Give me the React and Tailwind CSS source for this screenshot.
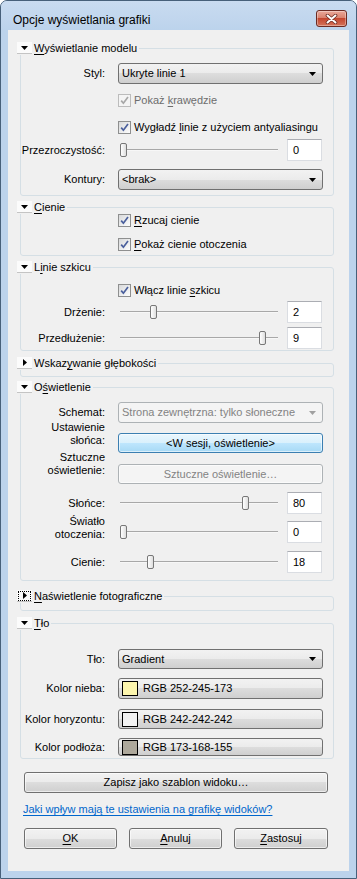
import React from "react";

const FONT = "font-['Liberation_Sans',Arial,sans-serif]";
const BTN_BG = "bg-[linear-gradient(#f2f2f2,#ebebeb_50%,#dddddd_50%,#cfcfcf)]";

const U = ({ children }) => <span className="underline underline-offset-[2px]">{children}</span>;

const Tri = ({ dir = "down", color = "#000" }) =>
  dir === "down" ? (
    <svg width="7" height="4" viewBox="0 0 7 4">
      <path d="M0 0H7L3.5 4Z" fill={color} />
    </svg>
  ) : (
    <svg width="4" height="7" viewBox="0 0 4 7">
      <path d="M0 0V7L4 3.5Z" fill={color} />
    </svg>
  );

const Group = ({ title, collapsed, focus, className = "", children }) => (
  <fieldset className={`ml-[12px] mr-[15px] min-w-0 border border-[#d5dfe5] rounded-[3px] ${className}`}>
    <legend className="-ml-[4px] pr-[2px] h-[14px] flex items-center">
      <span
        className={`w-[15px] h-[12px] flex items-center justify-center bg-[#fbfbfb] border-b border-[#c4c4c4] ${
          focus ? "outline-1 outline-dotted outline-black -outline-offset-2" : ""
        }`}
      >
        <Tri dir={collapsed ? "right" : "down"} />
      </span>
      <span className="ml-[2px] leading-[14px]">{title}</span>
    </legend>
    {children}
  </fieldset>
);

const Row = ({ label, className = "", labelClass = "", end, children }) => (
  <div className={`flex ${end ? "items-end" : "items-center"} ${className}`}>
    <div className={`w-[84px] shrink-0 text-right ${labelClass}`}>{label}</div>
    <div className="ml-[13px] self-stretch flex items-center">{children}</div>
  </div>
);

const Check = ({ checked, disabled }) => (
  <span
    className={`w-[13px] h-[13px] shrink-0 border flex items-center justify-center ${
      disabled ? "border-[#bcbcbc] bg-[#f4f4f4]" : "border-[#8e8f8f] bg-[linear-gradient(135deg,#d8d9da,#fdfdfd)]"
    }`}
  >
    {checked && (
      <svg width="9" height="9" viewBox="0 0 9 9">
        <path d="M1.2 4.6L3.4 7.2L8 1" fill="none" stroke={disabled ? "#a7a7a7" : "#4a5f9c"} strokeWidth="1.7" />
      </svg>
    )}
  </span>
);

const CheckRow = ({ className = "", checked, disabled, children }) => (
  <div className={`flex items-center h-[13px] ${className}`}>
    <div className="w-[97px] shrink-0" />
    <Check checked={checked} disabled={disabled} />
    <span className={`ml-[3px] ${disabled ? "text-[#6d6d6d]" : ""}`}>{children}</span>
  </div>
);

const Combo = ({ text, disabled, h = "h-[21px]" }) => (
  <div
    className={`w-[205px] ${h} rounded-[3px] border flex items-center pl-[3px] pr-[6px] ${
      disabled ? "border-[#adb2b5] bg-[#f4f4f4] text-[#838383]" : `border-[#707070] ${BTN_BG}`
    }`}
  >
    <span className="flex-1 truncate">{text}</span>
    <Tri color={disabled ? "#a0a0a0" : "#000"} />
  </div>
);

const Slider = ({ v }) => (
  <div className="relative w-[161px] h-[16px]">
    <div className="absolute left-[2px] right-[1px] top-[7px] h-[2px] border-t border-[#a8a8a8] bg-[#f7f7f7]" />
    <div
      className="absolute top-[1px] w-[7px] h-[14px] rounded-[2px] border border-[#777] bg-[linear-gradient(to_right,#ffffff,#dedede)]"
      style={{ left: 2 + Math.round(v * 151) }}
    />
  </div>
);

const TextBox = ({ value }) => (
  <div className="ml-[8px] w-[35px] h-[22px] bg-white border border-[#dadde2] border-t-[#abadb3] pl-[5px] flex items-center">
    {value}
  </div>
);

const Btn = ({ children, className = "", variant = "normal" }) => {
  const v = {
    normal: `border-[#707070] ${BTN_BG}`,
    blue: "border-[#3c7fb1] bg-[linear-gradient(#eaf6fd,#d9f0fc_50%,#bee6fd_50%,#a7d9f5)]",
    disabled: "border-[#adb2b5] bg-[#f4f4f4] text-[#838383]",
  }[variant];
  return (
    <div className={`rounded-[3px] border flex items-center justify-center shadow-[inset_0_0_0_1px_rgba(255,255,255,0.6)] ${v} ${className}`}>
      {children}
    </div>
  );
};

const Swatch = ({ color, text }) => (
  <div className={`w-[205px] h-full rounded-[3px] border border-[#707070] ${BTN_BG} flex items-center pl-[3px]`}>
    <span className={`w-[16px] h-[15px] border border-black ${color}`} />
    <span className="ml-[5px]">{text}</span>
  </div>
);

const Close = () => (
  <div className="w-[31px] h-[17px] rounded-[3px] border border-[#6b2a22] bg-[linear-gradient(#eaa89a,#d9826f_45%,#c4462f_50%,#d4735a)] flex items-center justify-center shadow-[inset_0_0_0_1px_rgba(255,255,255,0.35)]">
    <svg width="13" height="10" viewBox="0 0 13 10">
      <path d="M2.5 1.5L10.5 8.5M10.5 1.5L2.5 8.5" stroke="#6b2a22" strokeWidth="3.6" strokeLinecap="round" />
      <path d="M2.5 1.5L10.5 8.5M10.5 1.5L2.5 8.5" stroke="#ffffff" strokeWidth="2" strokeLinecap="round" />
    </svg>
  </div>
);

export default function App() {
  return (
    <div className={`w-[357px] h-[879px] ${FONT} text-[11px] leading-[13px] text-black`}>
      <div className="h-full flex flex-col border border-[#47607a] rounded-t-[7px] bg-[#bcd3ec]">
        <div className="h-[29px] shrink-0 flex items-start pl-[12px] pr-[9px] pt-[9px] rounded-t-[6px] bg-[linear-gradient(#c9dbf0,#bcd3ec)]">
          <div className="flex-1 text-[12px] leading-[15px] mt-[3px]">Opcje wyświetlania grafiki</div>
          <Close />
        </div>

        <div className="flex-1 mx-[7px] mb-[7px] bg-[#f0f0f0] flex flex-col">
          <Group title={<><U>W</U>yświetlanie modelu</>} className="mt-[11px] pb-[5px]">
            <Row label="Styl:" className="mt-[8px] h-[21px]">
              <Combo text="Ukryte linie 1" />
            </Row>
            <CheckRow className="mt-[10px]" checked disabled>
              Pokaż <U>k</U>rawędzie
            </CheckRow>
            <CheckRow className="mt-[14px]" checked>
              Wygładź <U>l</U>inie z użyciem antyaliasingu
            </CheckRow>
            <Row label="Przezroczystość:" className="mt-[5px] h-[22px]">
              <Slider v={0} />
              <TextBox value="0" />
            </Row>
            <Row label="Kontury:" className="mt-[8px] h-[21px]">
              <Combo text={"<brak>"} />
            </Row>
          </Group>

          <Group title={<><U>C</U>ienie</>} className="mt-[4px] pb-[4px]">
            <CheckRow checked>
              <U>R</U>zucaj cienie
            </CheckRow>
            <CheckRow className="mt-[11px]" checked>
              <U>P</U>okaż cienie otoczenia
            </CheckRow>
          </Group>

          <Group title={<>L<U>i</U>nie szkicu</>} className="mt-[4px] pb-[1px]">
            <CheckRow className="mt-[10px]" checked>
              Włącz linie <U>s</U>zkicu
            </CheckRow>
            <Row label="Drżenie:" className="mt-[4px] h-[22px]">
              <Slider v={0.2} />
              <TextBox value="2" />
            </Row>
            <Row label="Przedłużenie:" className="mt-[4px] h-[22px]">
              <Slider v={0.92} />
              <TextBox value="9" />
            </Row>
          </Group>

          <Group title={<>Wskaz<U>y</U>wanie głębokości</>} collapsed className="mt-[5px] pb-[6px]" />

          <Group title={<>O<U>ś</U>wietlenie</>} className="mt-[3px] pb-[7px]">
            <Row label="Schemat:" className="mt-[8px] h-[21px]">
              <Combo text="Strona zewnętrzna: tylko słoneczne" disabled />
            </Row>
            <Row
              label={<>Ustawienie<br />słońca:</>}
              end
              labelClass="pb-[6px]"
              className="mt-[10px] h-[20px]"
            >
              <Btn variant="blue" className="w-[205px] h-[20px]">
                {"<W sesji, oświetlenie>"}
              </Btn>
            </Row>
            <Row
              label={<>Sztuczne<br />oświetlenie:</>}
              end
              labelClass="pb-[7px]"
              className="mt-[11px] h-[20px]"
            >
              <Btn variant="disabled" className="w-[205px] h-[20px]">
                Sztuczne oświetlenie…
              </Btn>
            </Row>
            <Row label="Słońce:" className="mt-[8px] h-[22px]">
              <Slider v={0.81} />
              <TextBox value="80" />
            </Row>
            <Row
              label={<>Światło<br />otoczenia:</>}
              end
              labelClass="pb-[2px]"
              className="mt-[7px] h-[22px]"
            >
              <Slider v={0} />
              <TextBox value="0" />
            </Row>
            <Row label="Cienie:" className="mt-[8px] h-[22px]">
              <Slider v={0.18} />
              <TextBox value="18" />
            </Row>
          </Group>

          <Group title={<><U>N</U>aświetlenie fotograficzne</>} collapsed focus className="mt-[8px] pb-[7px]" />

          <Group title={<><U>T</U>ło</>} className="mt-[5px] pb-[2px]">
            <Row label="Tło:" className="mt-[19px] h-[20px]">
              <Combo text="Gradient" h="h-[20px]" />
            </Row>
            <Row label="Kolor nieba:" className="mt-[9px] h-[21px]">
              <Swatch color="bg-[rgb(252,245,173)]" text="RGB 252-245-173" />
            </Row>
            <Row label="Kolor horyzontu:" className="mt-[10px] h-[20px]">
              <Swatch color="bg-[rgb(242,242,242)]" text="RGB 242-242-242" />
            </Row>
            <Row label="Kolor podłoża:" className="mt-[9px] h-[18px]">
              <Swatch color="bg-[rgb(173,168,155)]" text="RGB 173-168-155" />
            </Row>
          </Group>

          <div className="ml-[16px] mt-[13px] w-[304px]">
            <Btn className="w-full h-[21px]">Zapisz jako szablon widoku…</Btn>
          </div>
          <div className="ml-[15px] mt-[10px] text-[#0066cc] underline underline-offset-[2px]">
            Jaki wpływ mają te ustawienia na grafikę widoków?
          </div>
          <div className="ml-[16px] mt-[12px] w-[304px] flex justify-between">
            <Btn className="w-[93px] h-[21px]">
              <U>O</U>K
            </Btn>
            <Btn className="w-[93px] h-[21px]">
              <U>A</U>nuluj
            </Btn>
            <Btn className="w-[94px] h-[21px]">
              <U>Z</U>astosuj
            </Btn>
          </div>
        </div>
      </div>
    </div>
  );
}
